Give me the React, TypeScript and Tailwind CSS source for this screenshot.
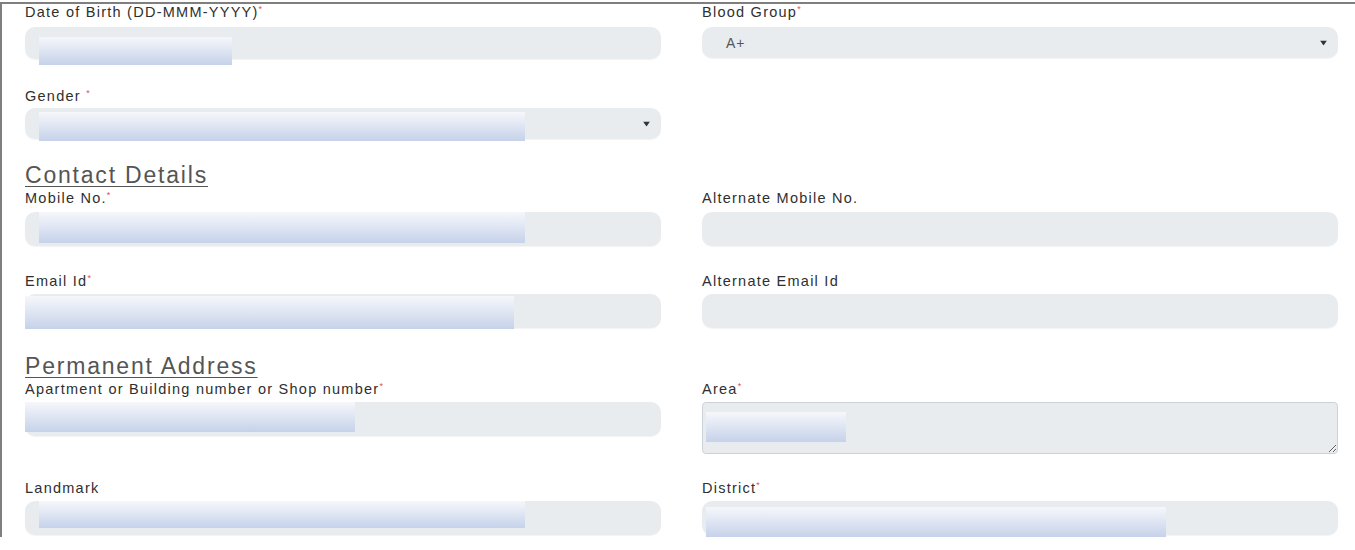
import type { ReactNode } from 'react'

const FONT = "font-['Liberation_Sans',Arial,sans-serif]"

function Label({ text, required }: { text: string; required?: boolean }) {
  return (
    <label className="block h-[16px] text-[14.5px] leading-[16px] tracking-[1.25px] text-[#2f2f2f]">
      {text}
      {required && <span className="align-top text-[9px] leading-[10px] text-[#d9534f]">*</span>}
    </label>
  )
}

// redaction bar that sits over the field value
function Mask({ className }: { className: string }) {
  return <div className={`absolute bg-linear-to-b from-[#f6f7fb] to-[#c6d2ea] ${className}`} />
}

function Field({ h, children }: { h: string; children?: ReactNode }) {
  return (
    <div className={`relative rounded-[10px] bg-[#e9ecef] shadow-[0_1px_1px_rgba(0,0,0,0.05)] ${h}`}>
      {children}
    </div>
  )
}

function Caret() {
  return (
    <svg className="absolute right-[11px] top-1/2 -translate-y-1/2" width="7" height="5" viewBox="0 0 7 5">
      <path d="M0 0h7L3.5 5z" fill="#333" />
    </svg>
  )
}

function Heading({ text }: { text: string }) {
  return (
    <h2 className="h-[22px] text-[23px] leading-[22px] tracking-[1.8px] text-[#555] underline underline-offset-[3px] decoration-1">
      {text}
    </h2>
  )
}

export default function App() {
  return (
    <div className={`bg-white pt-[2px] ${FONT}`}>
      <div className="border-l-2 border-t-2 border-[#7f7f7f] pl-[23px] pr-[17px] pb-[2px]">
        {/* dob / blood group */}
        <div className="grid grid-cols-2 gap-x-[41px]">
          <div>
            <Label text="Date of Birth (DD-MMM-YYYY)" required />
            <div className="mt-[7px]">
              <Field h="h-[32px]">
                <Mask className="left-[14px] top-[10px] h-[28px] w-[193px]" />
              </Field>
            </div>
          </div>
          <div>
            <Label text="Blood Group" required />
            <div className="mt-[7px]">
              <Field h="h-[31px]">
                <span className="absolute left-[24px] top-1/2 -translate-y-1/2 text-[14px] tracking-[0.8px] text-[#555]">A+</span>
                <Caret />
              </Field>
            </div>
          </div>
        </div>

        {/* gender */}
        <div className="mt-[29px] grid grid-cols-2 gap-x-[41px]">
          <div>
            <Label text="Gender " required />
            <div className="mt-[4px]">
              <Field h="h-[31px]">
                <Mask className="left-[14px] top-[4px] h-[29px] w-[486px]" />
                <Caret />
              </Field>
            </div>
          </div>
        </div>

        <div className="mt-[25px]">
          <Heading text="Contact Details" />
        </div>

        <div className="mt-[4px] grid grid-cols-2 gap-x-[41px]">
          <div>
            <Label text="Mobile No." required />
            <div className="mt-[6px]">
              <Field h="h-[34px]">
                <Mask className="left-[14px] top-0 h-[31px] w-[486px]" />
              </Field>
            </div>
          </div>
          <div>
            <Label text="Alternate Mobile No." />
            <div className="mt-[6px]">
              <Field h="h-[34px]" />
            </div>
          </div>
        </div>

        <div className="mt-[27px] grid grid-cols-2 gap-x-[41px]">
          <div>
            <Label text="Email Id" required />
            <div className="mt-[5px]">
              <Field h="h-[34px]">
                <Mask className="left-0 top-[2px] h-[33px] w-[489px]" />
              </Field>
            </div>
          </div>
          <div>
            <Label text="Alternate Email Id" />
            <div className="mt-[5px]">
              <Field h="h-[34px]" />
            </div>
          </div>
        </div>

        <div className="mt-[27px]">
          <Heading text="Permanent Address" />
        </div>

        <div className="mt-[4px] grid grid-cols-2 gap-x-[41px]">
          <div>
            <Label text="Apartment or Building number or Shop number" required />
            <div className="mt-[5px]">
              <Field h="h-[34px]">
                <Mask className="left-0 top-0 h-[30px] w-[330px]" />
              </Field>
            </div>
          </div>
          <div>
            <Label text="Area" required />
            <div className="relative mt-[5px]">
              <textarea
                readOnly
                className="block h-[52px] w-full rounded-[4px] border border-[#cdd2d8] bg-[#e9ecef]"
              />
              <Mask className="left-[4px] top-[10px] h-[30px] w-[140px]" />
            </div>
          </div>
        </div>

        <div className="mt-[26px] grid grid-cols-2 gap-x-[41px]">
          <div>
            <Label text="Landmark" />
            <div className="mt-[5px]">
              <Field h="h-[34px]">
                <Mask className="left-[14px] top-0 h-[27px] w-[486px]" />
              </Field>
            </div>
          </div>
          <div>
            <Label text="District" required />
            <div className="mt-[5px]">
              <Field h="h-[34px]">
                <Mask className="left-[4px] top-[6px] h-[30px] w-[460px]" />
              </Field>
            </div>
          </div>
        </div>
      </div>
    </div>
  )
}
